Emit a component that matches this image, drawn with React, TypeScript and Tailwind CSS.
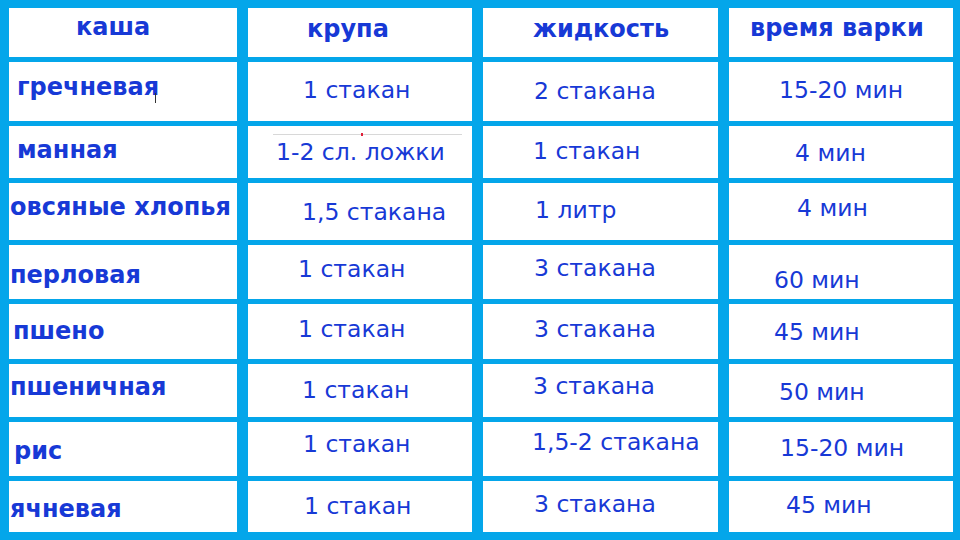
import React from "react";

type Cell = { t: string; pl: string; pt: string; b?: boolean };

const rows: Cell[][] = [
  [
    { t: "каша", pl: "pl-[67px]", pt: "pt-[5px]", b: true },
    { t: "крупа", pl: "pl-[59px]", pt: "pt-[7px]", b: true },
    { t: "жидкость", pl: "pl-[50px]", pt: "pt-[7px]", b: true },
    { t: "время варки", pl: "pl-[21px]", pt: "pt-[6px]", b: true },
  ],
  [
    { t: "гречневая", pl: "pl-[8px]", pt: "pt-[11px]", b: true },
    { t: "1 стакан", pl: "pl-[55px]", pt: "pt-[14px]" },
    { t: "2 стакана", pl: "pl-[51px]", pt: "pt-[15px]" },
    { t: "15-20 мин", pl: "pl-[50px]", pt: "pt-[14px]" },
  ],
  [
    { t: "манная", pl: "pl-[8px]", pt: "pt-[10px]", b: true },
    { t: "1-2 сл. ложки", pl: "pl-[28px]", pt: "pt-[12px]" },
    { t: "1 стакан", pl: "pl-[50px]", pt: "pt-[11px]" },
    { t: "4 мин", pl: "pl-[66px]", pt: "pt-[13px]" },
  ],
  [
    { t: "овсяные хлопья", pl: "pl-[1px]", pt: "pt-[10px]", b: true },
    { t: "1,5 стакана", pl: "pl-[54px]", pt: "pt-[15px]" },
    { t: "1 литр", pl: "pl-[52px]", pt: "pt-[13px]" },
    { t: "4 мин", pl: "pl-[68px]", pt: "pt-[11px]" },
  ],
  [
    { t: "перловая", pl: "pl-[1px]", pt: "pt-[16px]", b: true },
    { t: "1 стакан", pl: "pl-[50px]", pt: "pt-[10px]" },
    { t: "3 стакана", pl: "pl-[51px]", pt: "pt-[9px]" },
    { t: "60 мин", pl: "pl-[45px]", pt: "pt-[21px]" },
  ],
  [
    { t: "пшено", pl: "pl-[4px]", pt: "pt-[13px]", b: true },
    { t: "1 стакан", pl: "pl-[50px]", pt: "pt-[11px]" },
    { t: "3 стакана", pl: "pl-[51px]", pt: "pt-[11px]" },
    { t: "45 мин", pl: "pl-[45px]", pt: "pt-[14px]" },
  ],
  [
    { t: "пшеничная", pl: "pl-[1px]", pt: "pt-[9px]", b: true },
    { t: "1 стакан", pl: "pl-[54px]", pt: "pt-[12px]" },
    { t: "3 стакана", pl: "pl-[50px]", pt: "pt-[8px]" },
    { t: "50 мин", pl: "pl-[50px]", pt: "pt-[14px]" },
  ],
  [
    { t: "рис", pl: "pl-[5px]", pt: "pt-[15px]", b: true },
    { t: "1 стакан", pl: "pl-[55px]", pt: "pt-[8px]" },
    { t: "1,5-2 стакана", pl: "pl-[49px]", pt: "pt-[6px]" },
    { t: "15-20 мин", pl: "pl-[51px]", pt: "pt-[12px]" },
  ],
  [
    { t: "ячневая", pl: "pl-[1px]", pt: "pt-[14px]", b: true },
    { t: "1 стакан", pl: "pl-[56px]", pt: "pt-[11px]" },
    { t: "3 стакана", pl: "pl-[51px]", pt: "pt-[9px]" },
    { t: "45 мин", pl: "pl-[57px]", pt: "pt-[10px]" },
  ],
];

export default function App() {
  return (
    <div
      className="w-[960px] h-[540px] bg-[#04a6ea] overflow-hidden pl-[9px] pt-[8px]"
      style={{ fontFamily: '"DejaVu Sans", Verdana, sans-serif' }}
    >
      <div className="grid grid-cols-[228px_224px_235px_224px] grid-rows-[49px_59px_52px_57px_54px_55px_53px_54px_51px] gap-x-[11px] gap-y-[5px]">
        {rows.map((row, ri) =>
          row.map((c, ci) => (
            <div
              key={`${ri}-${ci}`}
              className={`relative bg-white whitespace-nowrap leading-[28px] text-[#1739d6] ${c.pl} ${c.pt} ${
                c.b ? "text-[24px] font-semibold" : "text-[23.5px] font-normal"
              }`}
            >
              {c.t}
              {ri === 1 && ci === 0 && (
                <span className="absolute left-[146px] top-[31px] w-[1px] h-[10px] bg-[#333]" />
              )}
              {ri === 2 && ci === 1 && (
                <>
                  <span className="absolute left-[25px] right-[10px] top-[8px] h-[1px] bg-[#d8d8d8]" />
                  <span className="absolute left-[113px] top-[7px] w-[2px] h-[3px] bg-[#e0203a]" />
                </>
              )}
            </div>
          ))
        )}
      </div>
    </div>
  );
}
